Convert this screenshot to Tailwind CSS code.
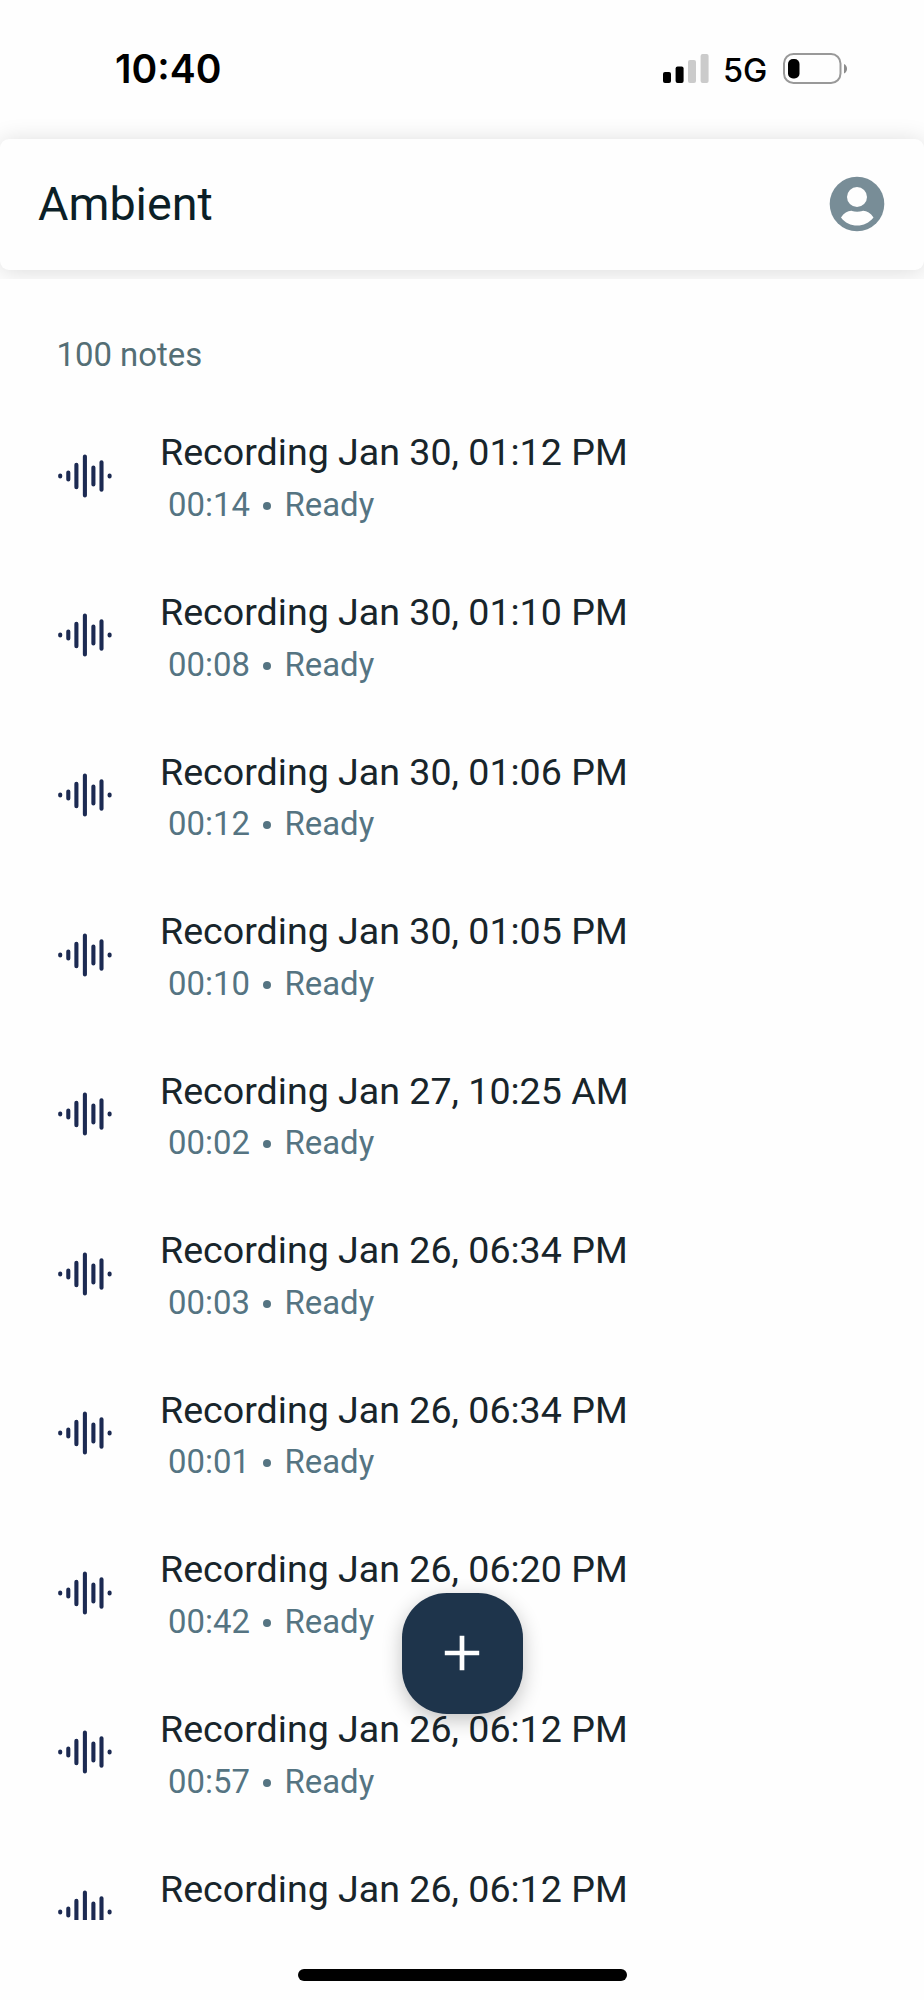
<!DOCTYPE html>
<html lang="en">
<head>
<meta charset="utf-8">
<title>Ambient</title>
<script src="https://cdn.jsdelivr.net/npm/@tailwindcss/browser@4"></script>
</head>
<body class="bg-[#fefefe]">
<svg class="hidden">
  <symbol id="wave" viewBox="0 0 56 48"><path d="M3.2 23.6v.9M11.3 20.5v7M19.4 12.7v22.6M27.9 4.5v39M36.4 15.5v17M44.5 10.2v27.6M52.6 23.6v.9" fill="none" stroke="#1c2a52" stroke-width="4.1" stroke-linecap="round"/></symbol>
</svg>
<div class="relative flex h-[2000px] w-[924px] flex-col overflow-hidden bg-[#fefefe] font-['Roboto',sans-serif]">
  <div class="flex h-[279px] shrink-0 flex-col overflow-hidden">
    <div class="flex h-[138.5px] shrink-0 items-start justify-between pr-[76px] pl-[115px]">
      <div class="mt-[45px] font-['Inter',sans-serif] text-[39px] leading-[48px] font-semibold tracking-[0px] text-black"><span>10:40</span></div>
      <div class="mt-[53px] flex items-start">
        <svg class="h-[30px] w-[46px]" viewBox="0 0 46 30"><g fill="#000"><rect x="0" y="19" width="8" height="11" rx="2"/><rect x="12.6" y="13.5" width="8" height="16.5" rx="2"/></g><g fill="#cbcbcb"><rect x="25" y="7" width="8" height="23" rx="2"/><rect x="37.6" y="1" width="8" height="29" rx="2"/></g></svg>
        <div class="-mt-[2px] ml-[14px] w-[43px] font-['Inter',sans-serif] text-[32.5px] leading-[40px] font-medium tracking-[-0.2px] whitespace-nowrap text-black"><span>5G</span></div>
        <svg class="ml-[17px] h-[32px] w-[65px]" viewBox="0 0 65 32"><rect x="1" y="1" width="56.5" height="29" rx="9.5" fill="none" stroke="#999" stroke-width="2"/><rect x="5" y="6" width="11.5" height="19.5" rx="5" fill="#000"/><path d="M61 11v9.5c4-1.500 4-8 0-9.500z" fill="#8c8c8c"/></svg>
      </div>
    </div>
    <header class="flex h-[131.5px] shrink-0 items-center justify-between rounded-[9px] bg-[#fefefe] pr-[39px] pl-[38px] shadow-[0_2px_24px_rgba(0,0,0,0.14)]">
      <h1 class="text-[46.700px] leading-[56px] text-[#0b1f27]"><span>Ambient</span></h1>
      <svg class="h-[56px] w-[56px]" viewBox="0 0 56 56"><circle cx="28" cy="28" r="27.300" fill="#788d97"/><circle cx="28" cy="21" r="10" fill="#fefefe"/><path d="M12 41.500C15 37 19 34.600 23 34.900C26 35.900 30 35.900 33.500 34.900C37.500 34.600 41.500 37 44.500 41.500C40 47 34.500 49.500 28.200 49.500S16 47 12 41.500z" fill="#fefefe"/></svg>
    </header>
  </div>
  <main class="h-[1641px] shrink-0 overflow-hidden">
    <p class="mt-[52px] ml-[56.500px] h-[64.800px] text-[32.900px] leading-[48px] text-[#546e75]"><span>100 notes</span></p>
    <ul id="notes"></ul>
  </main>
  <div class="mt-[49px] h-[12px] w-[329px] shrink-0 self-center rounded-full bg-black"></div>
  <button class="absolute top-[1593px] left-[402px] flex h-[120.500px] w-[120.500px] items-center justify-center rounded-[45px] bg-[#1e344b] shadow-[0_6px_20px_rgba(0,0,0,0.24)]" aria-label="New recording">
    <svg class="h-[36px] w-[36px]" viewBox="0 0 36 36"><path d="M18 .8v34.400M.8 18h34.400" stroke="#fefefe" stroke-width="4.700"/></svg>
  </button>
</div>
<template id="note">
  <li class="flex h-[159.580px] pl-[56.500px]">
    <svg class="mt-[56px] h-[48px] w-[56px] shrink-0"><use href="#wave"/></svg>
    <div class="pt-[28.600px] pl-[47.500px] whitespace-nowrap">
      <p class="text-[37.600px] leading-[56px] text-[#18252b]"><span class="t"></span></p>
      <p class="s flex pt-[0.600px] pl-[8px] text-[32.900px] leading-[48px] text-[#557482]"><span class="d w-[94.500px]"></span><span class="mt-[21px] size-[8px] rounded-full bg-[#557482]"></span><span class="ml-[14px]">Ready</span></p>
    </div>
  </li>
</template>
<script>
const notes = [
  ["Jan 30, 01:12 PM", "00:14"], ["Jan 30, 01:10 PM", "00:08"], ["Jan 30, 01:06 PM", "00:12"],
  ["Jan 30, 01:05 PM", "00:10"], ["Jan 27, 10:25 AM", "00:02"], ["Jan 26, 06:34 PM", "00:03"],
  ["Jan 26, 06:34 PM", "00:01"], ["Jan 26, 06:20 PM", "00:42"], ["Jan 26, 06:12 PM", "00:57"],
  ["Jan 26, 06:12 PM", null]
];
const tpl = document.getElementById("note");
for (const [date, length] of notes) {
  const row = tpl.content.cloneNode(true);
  row.querySelector(".t").textContent = "Recording " + date;
  if (length) row.querySelector(".d").textContent = length;
  else row.querySelector(".s").remove();
  document.getElementById("notes").append(row);
}
</script>
</body>
</html>
